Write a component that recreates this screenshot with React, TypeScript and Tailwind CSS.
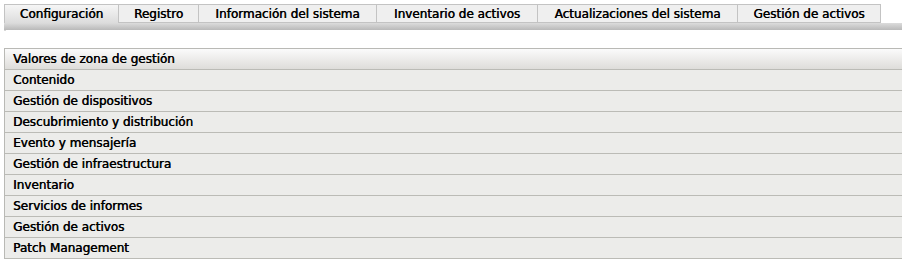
import React from 'react';

const tabs = [
  { label: 'Configuración', width: 115 },
  { label: 'Registro', width: 80 },
  { label: 'Información del sistema', width: 178 },
  { label: 'Inventario de activos', width: 161 },
  { label: 'Actualizaciones del sistema', width: 200 },
  { label: 'Gestión de activos', width: 143 },
];

const rows = [
  'Contenido',
  'Gestión de dispositivos',
  'Descubrimiento y distribución',
  'Evento y mensajería',
  'Gestión de infraestructura',
  'Inventario',
  'Servicios de informes',
  'Gestión de activos',
  'Patch Management',
];

export default function App() {
  return (
    <div
      className="w-[902px] h-[264px] bg-white overflow-hidden text-[12px] text-black [text-shadow:0.45px_0_0_#000]"
      style={{ fontFamily: '"DejaVu Sans", Verdana, sans-serif' }}
    >
      <div className="pl-[4px] pt-[4px]">
        <div className="flex h-[19px]">
          {tabs.map((t, i) => (
            <div
              key={t.label}
              className={`flex items-center justify-center border-t border-r border-[#c3c3c3] ${
                i === 0
                  ? 'border-l bg-gradient-to-b from-[#f6f6f6] to-[#dcdcdc]'
                  : 'bg-[#efefef] border-b'
              }`}
              style={{ width: t.width }}
            >
              {t.label}
            </div>
          ))}
        </div>
        <div className="h-[7px] bg-gradient-to-b from-[#dcdcdc] to-[#b9b9b9]" />
        <div className="h-[1px] w-[2px] bg-[#d8d8d8]" />
      </div>

      <div className="ml-[4px] mt-[17px] border-l border-t border-[#b9b9b5] w-[920px]">
        <div className="h-[21px] flex items-center pl-[8px] border-b border-[#bbbbb6] bg-gradient-to-b from-[#fbfbfb] to-[#deddda]">
          Valores de zona de gestión
        </div>
        {rows.map((r) => (
          <div
            key={r}
            className="h-[21px] flex items-center pl-[8px] bg-[#ececea] border-b border-[#bbbbb6]"
          >
            {r}
          </div>
        ))}
      </div>
    </div>
  );
}
